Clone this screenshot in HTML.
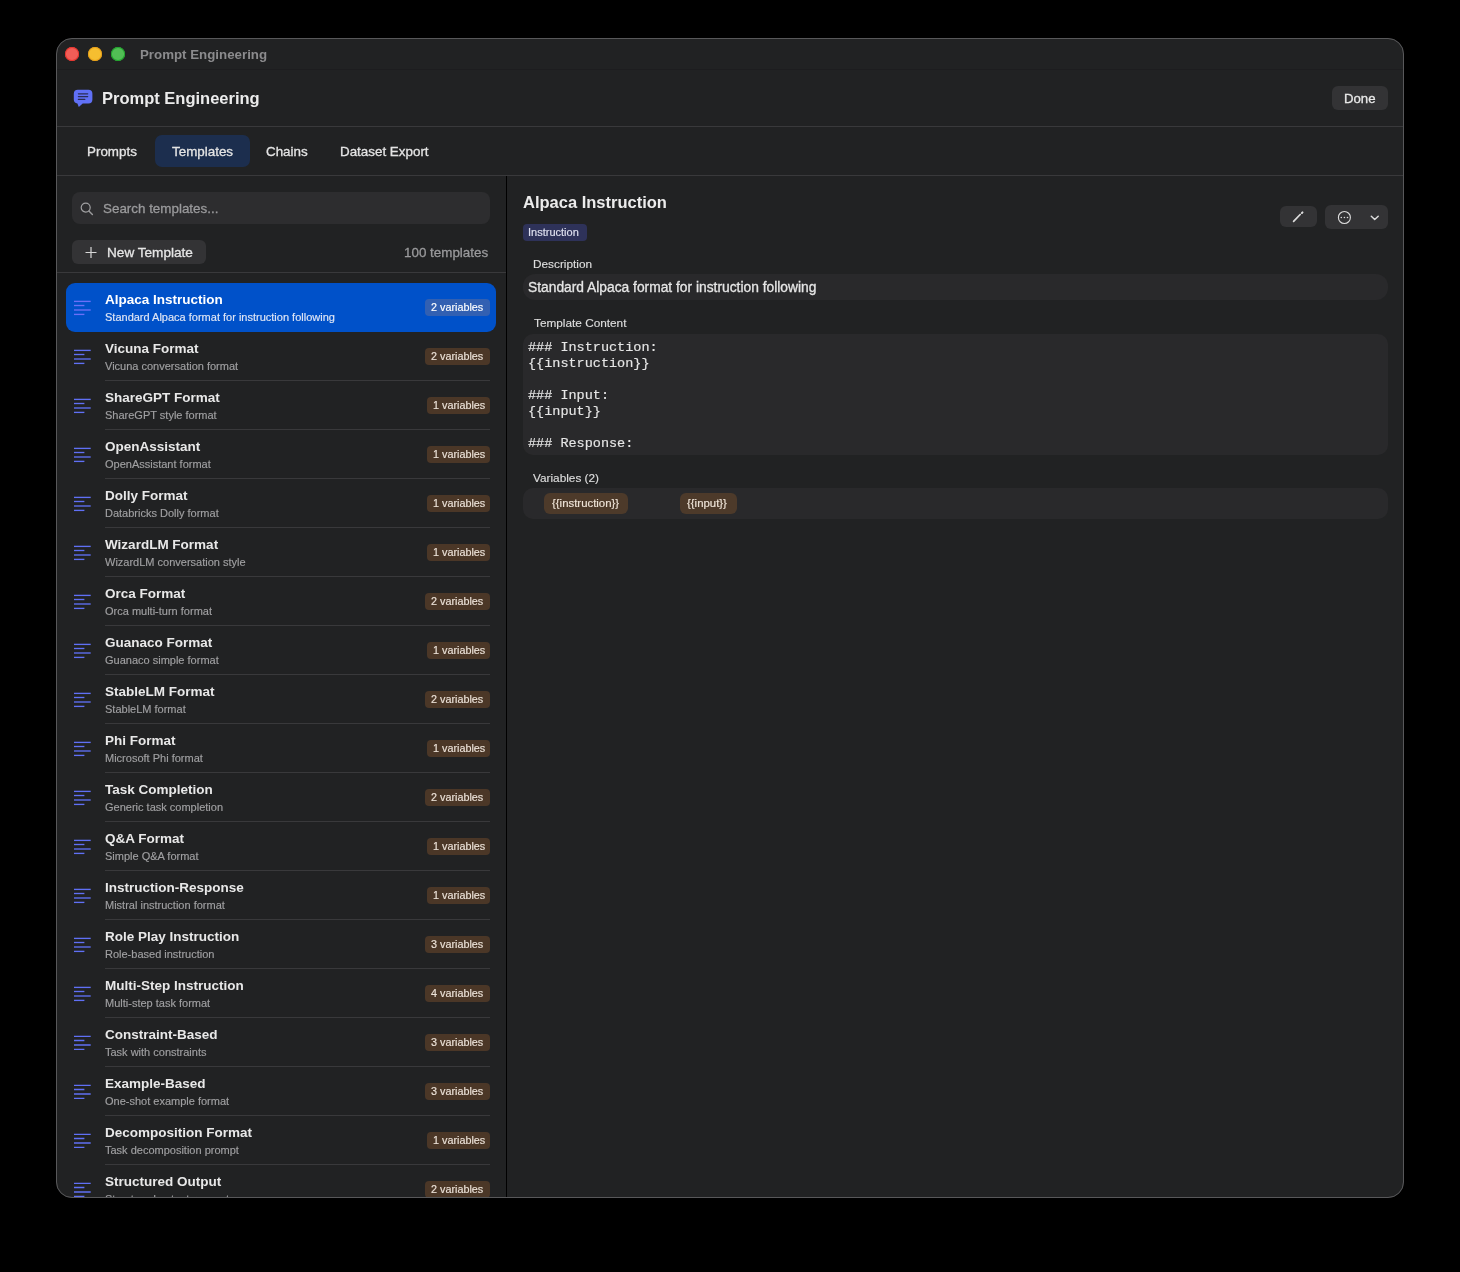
<!DOCTYPE html>
<html><head><meta charset="utf-8"><style>
html,body{margin:0;padding:0;background:#000;}
body{width:1460px;height:1272px;position:relative;overflow:hidden;-webkit-font-smoothing:antialiased;}
</style></head><body>
<div style="position:absolute;left:0px;top:0px;width:1460px;height:1272px;background:#000;border-radius:0px;"></div>
<div style="position:absolute;left:56px;top:38px;width:1348px;height:1160px;border-radius:16px;overflow:hidden;background:#212223">
<div style="position:absolute;left:0px;top:31px;width:1348px;height:1px;background:#1d1d1f;border-radius:0px;"></div>
<div style="position:absolute;left:9px;top:9px;width:14px;height:14px;background:#f25d57;border-radius:7px;box-shadow:inset 0 0 0 0.9px #e8332c;"></div>
<div style="position:absolute;left:32px;top:9px;width:14px;height:14px;background:#f6be30;border-radius:7px;box-shadow:inset 0 0 0 0.9px #e89f17;"></div>
<div style="position:absolute;left:55px;top:9px;width:14px;height:14px;background:#52be55;border-radius:7px;box-shadow:inset 0 0 0 0.9px #1ea52b;"></div>
<div style="position:absolute;left:83.50px;top:9.94px;font-family:'Liberation Sans', sans-serif;font-size:13.3px;line-height:13.3px;font-weight:bold;color:#8b8b8d;white-space:pre;will-change:transform;">Prompt Engineering</div>
<svg style="position:absolute;left:17px;top:50px" width="22" height="20" viewBox="0 0 22 20"><path d="M5 1.7h10.4a4 4 0 0 1 4 4v5.9a4 4 0 0 1-4 4H9.7L5.8 18.9l-1.4-3.3a4 4 0 0 1-3.6-4V5.7a4 4 0 0 1 4-4z" fill="#6070f5"/><path d="M5.4 5.8h9.3M5.4 8.5h9.3M5.4 11.4h6.4" stroke="#2a2d55" stroke-width="1.25" stroke-linecap="round"/></svg>
<div style="position:absolute;left:45.90px;top:52.43px;font-family:'Liberation Sans', sans-serif;font-size:16.5px;line-height:16.5px;font-weight:bold;color:#ececec;white-space:pre;will-change:transform;">Prompt Engineering</div>
<div style="position:absolute;left:1276px;top:48px;width:56px;height:24px;background:#333335;border-radius:6px;"></div>
<div style="position:absolute;left:1288.20px;top:53.83px;font-family:'Liberation Sans', sans-serif;font-size:13.2px;line-height:13.2px;font-weight:normal;color:#e8e8e8;white-space:pre;will-change:transform;-webkit-text-stroke:0.3px #e8e8e8;">Done</div>
<div style="position:absolute;left:0px;top:88px;width:1348px;height:1px;background:#39393b;border-radius:0px;"></div>
<div style="position:absolute;left:99px;top:97px;width:95px;height:32px;background:#1c2e4e;border-radius:7px;"></div>
<div style="position:absolute;left:30.70px;top:106.86px;font-family:'Liberation Sans', sans-serif;font-size:13.4px;line-height:13.4px;font-weight:normal;color:#e4e4e4;white-space:pre;will-change:transform;-webkit-text-stroke:0.3px #e4e4e4;">Prompts</div>
<div style="position:absolute;left:115.50px;top:106.86px;font-family:'Liberation Sans', sans-serif;font-size:13.4px;line-height:13.4px;font-weight:normal;color:#e4e4e4;white-space:pre;will-change:transform;-webkit-text-stroke:0.3px #e4e4e4;">Templates</div>
<div style="position:absolute;left:209.80px;top:106.86px;font-family:'Liberation Sans', sans-serif;font-size:13.4px;line-height:13.4px;font-weight:normal;color:#e4e4e4;white-space:pre;will-change:transform;-webkit-text-stroke:0.3px #e4e4e4;">Chains</div>
<div style="position:absolute;left:283.80px;top:106.86px;font-family:'Liberation Sans', sans-serif;font-size:13.4px;line-height:13.4px;font-weight:normal;color:#e4e4e4;white-space:pre;will-change:transform;-webkit-text-stroke:0.3px #e4e4e4;">Dataset Export</div>
<div style="position:absolute;left:0px;top:137px;width:1348px;height:1px;background:#39393b;border-radius:0px;"></div>
<div style="position:absolute;left:16px;top:154px;width:418px;height:32px;background:#2d2d2f;border-radius:8px;"></div>
<svg style="position:absolute;left:23px;top:162px" width="16" height="18" viewBox="0 0 16 18"><circle cx="6.7" cy="7.6" r="4.5" fill="none" stroke="#a0a0a2" stroke-width="1.2"/><path d="M9.9 10.9l3.5 3.7" stroke="#9a9a9c" stroke-width="1.4" stroke-linecap="round"/></svg>
<div style="position:absolute;left:46.80px;top:163.96px;font-family:'Liberation Sans', sans-serif;font-size:13.4px;line-height:13.4px;font-weight:normal;color:#9a9a9c;white-space:pre;will-change:transform;-webkit-text-stroke:0.3px #9a9a9c;">Search templates...</div>
<div style="position:absolute;left:16px;top:202px;width:134px;height:24px;background:#333335;border-radius:6px;"></div>
<svg style="position:absolute;left:28px;top:208px" width="14" height="14" viewBox="0 0 14 14"><path d="M7 1v11M1.5 6.5h11" stroke="#d8d8d8" stroke-width="1.2"/></svg>
<div style="position:absolute;left:51.00px;top:207.59px;font-family:'Liberation Sans', sans-serif;font-size:13.6px;line-height:13.6px;font-weight:normal;color:#e6e6e6;white-space:pre;will-change:transform;-webkit-text-stroke:0.3px #e6e6e6;">New Template</div>
<div style="position:absolute;left:347.50px;top:207.66px;font-family:'Liberation Sans', sans-serif;font-size:13.4px;line-height:13.4px;font-weight:normal;color:#9a9a9c;white-space:pre;will-change:transform;-webkit-text-stroke:0.3px #9a9a9c;">100 templates</div>
<div style="position:absolute;left:0px;top:234px;width:450px;height:1px;background:#39393b;border-radius:0px;"></div>
<div style="position:absolute;left:450px;top:138px;width:1px;height:1022px;background:#000000;border-radius:0px;"></div>
<div style="position:absolute;left:10px;top:245px;width:430px;height:49px;background:#0051c9;border-radius:9px;"></div>
<svg style="position:absolute;left:17px;top:245px" width="20" height="40" viewBox="0 0 20 40"><path d="M1 18.40h16.70" stroke="#6b70f8" stroke-width="1.35"/><path d="M1 22.50h10.40" stroke="#6b70f8" stroke-width="1.35"/><path d="M1 27.00h16.70" stroke="#6b70f8" stroke-width="1.35"/><path d="M1 31.40h10.40" stroke="#6b70f8" stroke-width="1.35"/></svg>
<div style="position:absolute;left:48.60px;top:254.87px;font-family:'Liberation Sans', sans-serif;font-size:13.5px;line-height:13.5px;font-weight:bold;color:#ffffff;white-space:pre;will-change:transform;">Alpaca Instruction</div>
<div style="position:absolute;left:48.60px;top:273.69px;font-family:'Liberation Sans', sans-serif;font-size:11px;line-height:11px;font-weight:normal;color:#dfe6f5;white-space:pre;will-change:transform;-webkit-text-stroke:0.15px #dfe6f5;">Standard Alpaca format for instruction following</div>
<div style="position:absolute;left:369px;top:261px;width:65px;height:17px;background:#3260b2;border-radius:4px;"></div>
<div style="position:absolute;left:375.00px;top:263.76px;font-family:'Liberation Sans', sans-serif;font-size:10.8px;line-height:10.8px;font-weight:normal;color:#ffffff;white-space:pre;will-change:transform;-webkit-text-stroke:0.15px #ffffff;">2 variables</div>
<div style="position:absolute;left:49px;top:342px;width:385px;height:1px;background:#39393b;border-radius:0px;"></div>
<svg style="position:absolute;left:17px;top:294px" width="20" height="40" viewBox="0 0 20 40"><path d="M1 18.40h16.70" stroke="#6070f5" stroke-width="1.35"/><path d="M1 22.50h10.40" stroke="#6070f5" stroke-width="1.35"/><path d="M1 27.00h16.70" stroke="#6070f5" stroke-width="1.35"/><path d="M1 31.40h10.40" stroke="#6070f5" stroke-width="1.35"/></svg>
<div style="position:absolute;left:48.60px;top:303.87px;font-family:'Liberation Sans', sans-serif;font-size:13.5px;line-height:13.5px;font-weight:bold;color:#e8e8e8;white-space:pre;will-change:transform;">Vicuna Format</div>
<div style="position:absolute;left:48.60px;top:322.69px;font-family:'Liberation Sans', sans-serif;font-size:11px;line-height:11px;font-weight:normal;color:#a0a0a2;white-space:pre;will-change:transform;-webkit-text-stroke:0.15px #a0a0a2;">Vicuna conversation format</div>
<div style="position:absolute;left:369px;top:310px;width:65px;height:17px;background:#4b3727;border-radius:4px;"></div>
<div style="position:absolute;left:375.00px;top:312.76px;font-family:'Liberation Sans', sans-serif;font-size:10.8px;line-height:10.8px;font-weight:normal;color:#ece2d8;white-space:pre;will-change:transform;-webkit-text-stroke:0.15px #ece2d8;">2 variables</div>
<div style="position:absolute;left:49px;top:391px;width:385px;height:1px;background:#39393b;border-radius:0px;"></div>
<svg style="position:absolute;left:17px;top:343px" width="20" height="40" viewBox="0 0 20 40"><path d="M1 18.40h16.70" stroke="#6070f5" stroke-width="1.35"/><path d="M1 22.50h10.40" stroke="#6070f5" stroke-width="1.35"/><path d="M1 27.00h16.70" stroke="#6070f5" stroke-width="1.35"/><path d="M1 31.40h10.40" stroke="#6070f5" stroke-width="1.35"/></svg>
<div style="position:absolute;left:48.60px;top:352.87px;font-family:'Liberation Sans', sans-serif;font-size:13.5px;line-height:13.5px;font-weight:bold;color:#e8e8e8;white-space:pre;will-change:transform;">ShareGPT Format</div>
<div style="position:absolute;left:48.60px;top:371.69px;font-family:'Liberation Sans', sans-serif;font-size:11px;line-height:11px;font-weight:normal;color:#a0a0a2;white-space:pre;will-change:transform;-webkit-text-stroke:0.15px #a0a0a2;">ShareGPT style format</div>
<div style="position:absolute;left:371px;top:359px;width:63px;height:17px;background:#4b3727;border-radius:4px;"></div>
<div style="position:absolute;left:377.00px;top:361.76px;font-family:'Liberation Sans', sans-serif;font-size:10.8px;line-height:10.8px;font-weight:normal;color:#ece2d8;white-space:pre;will-change:transform;-webkit-text-stroke:0.15px #ece2d8;">1 variables</div>
<div style="position:absolute;left:49px;top:440px;width:385px;height:1px;background:#39393b;border-radius:0px;"></div>
<svg style="position:absolute;left:17px;top:392px" width="20" height="40" viewBox="0 0 20 40"><path d="M1 18.40h16.70" stroke="#6070f5" stroke-width="1.35"/><path d="M1 22.50h10.40" stroke="#6070f5" stroke-width="1.35"/><path d="M1 27.00h16.70" stroke="#6070f5" stroke-width="1.35"/><path d="M1 31.40h10.40" stroke="#6070f5" stroke-width="1.35"/></svg>
<div style="position:absolute;left:48.60px;top:401.87px;font-family:'Liberation Sans', sans-serif;font-size:13.5px;line-height:13.5px;font-weight:bold;color:#e8e8e8;white-space:pre;will-change:transform;">OpenAssistant</div>
<div style="position:absolute;left:48.60px;top:420.69px;font-family:'Liberation Sans', sans-serif;font-size:11px;line-height:11px;font-weight:normal;color:#a0a0a2;white-space:pre;will-change:transform;-webkit-text-stroke:0.15px #a0a0a2;">OpenAssistant format</div>
<div style="position:absolute;left:371px;top:408px;width:63px;height:17px;background:#4b3727;border-radius:4px;"></div>
<div style="position:absolute;left:377.00px;top:410.76px;font-family:'Liberation Sans', sans-serif;font-size:10.8px;line-height:10.8px;font-weight:normal;color:#ece2d8;white-space:pre;will-change:transform;-webkit-text-stroke:0.15px #ece2d8;">1 variables</div>
<div style="position:absolute;left:49px;top:489px;width:385px;height:1px;background:#39393b;border-radius:0px;"></div>
<svg style="position:absolute;left:17px;top:441px" width="20" height="40" viewBox="0 0 20 40"><path d="M1 18.40h16.70" stroke="#6070f5" stroke-width="1.35"/><path d="M1 22.50h10.40" stroke="#6070f5" stroke-width="1.35"/><path d="M1 27.00h16.70" stroke="#6070f5" stroke-width="1.35"/><path d="M1 31.40h10.40" stroke="#6070f5" stroke-width="1.35"/></svg>
<div style="position:absolute;left:48.60px;top:450.87px;font-family:'Liberation Sans', sans-serif;font-size:13.5px;line-height:13.5px;font-weight:bold;color:#e8e8e8;white-space:pre;will-change:transform;">Dolly Format</div>
<div style="position:absolute;left:48.60px;top:469.69px;font-family:'Liberation Sans', sans-serif;font-size:11px;line-height:11px;font-weight:normal;color:#a0a0a2;white-space:pre;will-change:transform;-webkit-text-stroke:0.15px #a0a0a2;">Databricks Dolly format</div>
<div style="position:absolute;left:371px;top:457px;width:63px;height:17px;background:#4b3727;border-radius:4px;"></div>
<div style="position:absolute;left:377.00px;top:459.76px;font-family:'Liberation Sans', sans-serif;font-size:10.8px;line-height:10.8px;font-weight:normal;color:#ece2d8;white-space:pre;will-change:transform;-webkit-text-stroke:0.15px #ece2d8;">1 variables</div>
<div style="position:absolute;left:49px;top:538px;width:385px;height:1px;background:#39393b;border-radius:0px;"></div>
<svg style="position:absolute;left:17px;top:490px" width="20" height="40" viewBox="0 0 20 40"><path d="M1 18.40h16.70" stroke="#6070f5" stroke-width="1.35"/><path d="M1 22.50h10.40" stroke="#6070f5" stroke-width="1.35"/><path d="M1 27.00h16.70" stroke="#6070f5" stroke-width="1.35"/><path d="M1 31.40h10.40" stroke="#6070f5" stroke-width="1.35"/></svg>
<div style="position:absolute;left:48.60px;top:499.87px;font-family:'Liberation Sans', sans-serif;font-size:13.5px;line-height:13.5px;font-weight:bold;color:#e8e8e8;white-space:pre;will-change:transform;">WizardLM Format</div>
<div style="position:absolute;left:48.60px;top:518.69px;font-family:'Liberation Sans', sans-serif;font-size:11px;line-height:11px;font-weight:normal;color:#a0a0a2;white-space:pre;will-change:transform;-webkit-text-stroke:0.15px #a0a0a2;">WizardLM conversation style</div>
<div style="position:absolute;left:371px;top:506px;width:63px;height:17px;background:#4b3727;border-radius:4px;"></div>
<div style="position:absolute;left:377.00px;top:508.76px;font-family:'Liberation Sans', sans-serif;font-size:10.8px;line-height:10.8px;font-weight:normal;color:#ece2d8;white-space:pre;will-change:transform;-webkit-text-stroke:0.15px #ece2d8;">1 variables</div>
<div style="position:absolute;left:49px;top:587px;width:385px;height:1px;background:#39393b;border-radius:0px;"></div>
<svg style="position:absolute;left:17px;top:539px" width="20" height="40" viewBox="0 0 20 40"><path d="M1 18.40h16.70" stroke="#6070f5" stroke-width="1.35"/><path d="M1 22.50h10.40" stroke="#6070f5" stroke-width="1.35"/><path d="M1 27.00h16.70" stroke="#6070f5" stroke-width="1.35"/><path d="M1 31.40h10.40" stroke="#6070f5" stroke-width="1.35"/></svg>
<div style="position:absolute;left:48.60px;top:548.87px;font-family:'Liberation Sans', sans-serif;font-size:13.5px;line-height:13.5px;font-weight:bold;color:#e8e8e8;white-space:pre;will-change:transform;">Orca Format</div>
<div style="position:absolute;left:48.60px;top:567.69px;font-family:'Liberation Sans', sans-serif;font-size:11px;line-height:11px;font-weight:normal;color:#a0a0a2;white-space:pre;will-change:transform;-webkit-text-stroke:0.15px #a0a0a2;">Orca multi-turn format</div>
<div style="position:absolute;left:369px;top:555px;width:65px;height:17px;background:#4b3727;border-radius:4px;"></div>
<div style="position:absolute;left:375.00px;top:557.76px;font-family:'Liberation Sans', sans-serif;font-size:10.8px;line-height:10.8px;font-weight:normal;color:#ece2d8;white-space:pre;will-change:transform;-webkit-text-stroke:0.15px #ece2d8;">2 variables</div>
<div style="position:absolute;left:49px;top:636px;width:385px;height:1px;background:#39393b;border-radius:0px;"></div>
<svg style="position:absolute;left:17px;top:588px" width="20" height="40" viewBox="0 0 20 40"><path d="M1 18.40h16.70" stroke="#6070f5" stroke-width="1.35"/><path d="M1 22.50h10.40" stroke="#6070f5" stroke-width="1.35"/><path d="M1 27.00h16.70" stroke="#6070f5" stroke-width="1.35"/><path d="M1 31.40h10.40" stroke="#6070f5" stroke-width="1.35"/></svg>
<div style="position:absolute;left:48.60px;top:597.87px;font-family:'Liberation Sans', sans-serif;font-size:13.5px;line-height:13.5px;font-weight:bold;color:#e8e8e8;white-space:pre;will-change:transform;">Guanaco Format</div>
<div style="position:absolute;left:48.60px;top:616.69px;font-family:'Liberation Sans', sans-serif;font-size:11px;line-height:11px;font-weight:normal;color:#a0a0a2;white-space:pre;will-change:transform;-webkit-text-stroke:0.15px #a0a0a2;">Guanaco simple format</div>
<div style="position:absolute;left:371px;top:604px;width:63px;height:17px;background:#4b3727;border-radius:4px;"></div>
<div style="position:absolute;left:377.00px;top:606.76px;font-family:'Liberation Sans', sans-serif;font-size:10.8px;line-height:10.8px;font-weight:normal;color:#ece2d8;white-space:pre;will-change:transform;-webkit-text-stroke:0.15px #ece2d8;">1 variables</div>
<div style="position:absolute;left:49px;top:685px;width:385px;height:1px;background:#39393b;border-radius:0px;"></div>
<svg style="position:absolute;left:17px;top:637px" width="20" height="40" viewBox="0 0 20 40"><path d="M1 18.40h16.70" stroke="#6070f5" stroke-width="1.35"/><path d="M1 22.50h10.40" stroke="#6070f5" stroke-width="1.35"/><path d="M1 27.00h16.70" stroke="#6070f5" stroke-width="1.35"/><path d="M1 31.40h10.40" stroke="#6070f5" stroke-width="1.35"/></svg>
<div style="position:absolute;left:48.60px;top:646.87px;font-family:'Liberation Sans', sans-serif;font-size:13.5px;line-height:13.5px;font-weight:bold;color:#e8e8e8;white-space:pre;will-change:transform;">StableLM Format</div>
<div style="position:absolute;left:48.60px;top:665.69px;font-family:'Liberation Sans', sans-serif;font-size:11px;line-height:11px;font-weight:normal;color:#a0a0a2;white-space:pre;will-change:transform;-webkit-text-stroke:0.15px #a0a0a2;">StableLM format</div>
<div style="position:absolute;left:369px;top:653px;width:65px;height:17px;background:#4b3727;border-radius:4px;"></div>
<div style="position:absolute;left:375.00px;top:655.76px;font-family:'Liberation Sans', sans-serif;font-size:10.8px;line-height:10.8px;font-weight:normal;color:#ece2d8;white-space:pre;will-change:transform;-webkit-text-stroke:0.15px #ece2d8;">2 variables</div>
<div style="position:absolute;left:49px;top:734px;width:385px;height:1px;background:#39393b;border-radius:0px;"></div>
<svg style="position:absolute;left:17px;top:686px" width="20" height="40" viewBox="0 0 20 40"><path d="M1 18.40h16.70" stroke="#6070f5" stroke-width="1.35"/><path d="M1 22.50h10.40" stroke="#6070f5" stroke-width="1.35"/><path d="M1 27.00h16.70" stroke="#6070f5" stroke-width="1.35"/><path d="M1 31.40h10.40" stroke="#6070f5" stroke-width="1.35"/></svg>
<div style="position:absolute;left:48.60px;top:695.87px;font-family:'Liberation Sans', sans-serif;font-size:13.5px;line-height:13.5px;font-weight:bold;color:#e8e8e8;white-space:pre;will-change:transform;">Phi Format</div>
<div style="position:absolute;left:48.60px;top:714.69px;font-family:'Liberation Sans', sans-serif;font-size:11px;line-height:11px;font-weight:normal;color:#a0a0a2;white-space:pre;will-change:transform;-webkit-text-stroke:0.15px #a0a0a2;">Microsoft Phi format</div>
<div style="position:absolute;left:371px;top:702px;width:63px;height:17px;background:#4b3727;border-radius:4px;"></div>
<div style="position:absolute;left:377.00px;top:704.76px;font-family:'Liberation Sans', sans-serif;font-size:10.8px;line-height:10.8px;font-weight:normal;color:#ece2d8;white-space:pre;will-change:transform;-webkit-text-stroke:0.15px #ece2d8;">1 variables</div>
<div style="position:absolute;left:49px;top:783px;width:385px;height:1px;background:#39393b;border-radius:0px;"></div>
<svg style="position:absolute;left:17px;top:735px" width="20" height="40" viewBox="0 0 20 40"><path d="M1 18.40h16.70" stroke="#6070f5" stroke-width="1.35"/><path d="M1 22.50h10.40" stroke="#6070f5" stroke-width="1.35"/><path d="M1 27.00h16.70" stroke="#6070f5" stroke-width="1.35"/><path d="M1 31.40h10.40" stroke="#6070f5" stroke-width="1.35"/></svg>
<div style="position:absolute;left:48.60px;top:744.87px;font-family:'Liberation Sans', sans-serif;font-size:13.5px;line-height:13.5px;font-weight:bold;color:#e8e8e8;white-space:pre;will-change:transform;">Task Completion</div>
<div style="position:absolute;left:48.60px;top:763.69px;font-family:'Liberation Sans', sans-serif;font-size:11px;line-height:11px;font-weight:normal;color:#a0a0a2;white-space:pre;will-change:transform;-webkit-text-stroke:0.15px #a0a0a2;">Generic task completion</div>
<div style="position:absolute;left:369px;top:751px;width:65px;height:17px;background:#4b3727;border-radius:4px;"></div>
<div style="position:absolute;left:375.00px;top:753.76px;font-family:'Liberation Sans', sans-serif;font-size:10.8px;line-height:10.8px;font-weight:normal;color:#ece2d8;white-space:pre;will-change:transform;-webkit-text-stroke:0.15px #ece2d8;">2 variables</div>
<div style="position:absolute;left:49px;top:832px;width:385px;height:1px;background:#39393b;border-radius:0px;"></div>
<svg style="position:absolute;left:17px;top:784px" width="20" height="40" viewBox="0 0 20 40"><path d="M1 18.40h16.70" stroke="#6070f5" stroke-width="1.35"/><path d="M1 22.50h10.40" stroke="#6070f5" stroke-width="1.35"/><path d="M1 27.00h16.70" stroke="#6070f5" stroke-width="1.35"/><path d="M1 31.40h10.40" stroke="#6070f5" stroke-width="1.35"/></svg>
<div style="position:absolute;left:48.60px;top:793.87px;font-family:'Liberation Sans', sans-serif;font-size:13.5px;line-height:13.5px;font-weight:bold;color:#e8e8e8;white-space:pre;will-change:transform;">Q&amp;A Format</div>
<div style="position:absolute;left:48.60px;top:812.69px;font-family:'Liberation Sans', sans-serif;font-size:11px;line-height:11px;font-weight:normal;color:#a0a0a2;white-space:pre;will-change:transform;-webkit-text-stroke:0.15px #a0a0a2;">Simple Q&amp;A format</div>
<div style="position:absolute;left:371px;top:800px;width:63px;height:17px;background:#4b3727;border-radius:4px;"></div>
<div style="position:absolute;left:377.00px;top:802.76px;font-family:'Liberation Sans', sans-serif;font-size:10.8px;line-height:10.8px;font-weight:normal;color:#ece2d8;white-space:pre;will-change:transform;-webkit-text-stroke:0.15px #ece2d8;">1 variables</div>
<div style="position:absolute;left:49px;top:881px;width:385px;height:1px;background:#39393b;border-radius:0px;"></div>
<svg style="position:absolute;left:17px;top:833px" width="20" height="40" viewBox="0 0 20 40"><path d="M1 18.40h16.70" stroke="#6070f5" stroke-width="1.35"/><path d="M1 22.50h10.40" stroke="#6070f5" stroke-width="1.35"/><path d="M1 27.00h16.70" stroke="#6070f5" stroke-width="1.35"/><path d="M1 31.40h10.40" stroke="#6070f5" stroke-width="1.35"/></svg>
<div style="position:absolute;left:48.60px;top:842.87px;font-family:'Liberation Sans', sans-serif;font-size:13.5px;line-height:13.5px;font-weight:bold;color:#e8e8e8;white-space:pre;will-change:transform;">Instruction-Response</div>
<div style="position:absolute;left:48.60px;top:861.69px;font-family:'Liberation Sans', sans-serif;font-size:11px;line-height:11px;font-weight:normal;color:#a0a0a2;white-space:pre;will-change:transform;-webkit-text-stroke:0.15px #a0a0a2;">Mistral instruction format</div>
<div style="position:absolute;left:371px;top:849px;width:63px;height:17px;background:#4b3727;border-radius:4px;"></div>
<div style="position:absolute;left:377.00px;top:851.76px;font-family:'Liberation Sans', sans-serif;font-size:10.8px;line-height:10.8px;font-weight:normal;color:#ece2d8;white-space:pre;will-change:transform;-webkit-text-stroke:0.15px #ece2d8;">1 variables</div>
<div style="position:absolute;left:49px;top:930px;width:385px;height:1px;background:#39393b;border-radius:0px;"></div>
<svg style="position:absolute;left:17px;top:882px" width="20" height="40" viewBox="0 0 20 40"><path d="M1 18.40h16.70" stroke="#6070f5" stroke-width="1.35"/><path d="M1 22.50h10.40" stroke="#6070f5" stroke-width="1.35"/><path d="M1 27.00h16.70" stroke="#6070f5" stroke-width="1.35"/><path d="M1 31.40h10.40" stroke="#6070f5" stroke-width="1.35"/></svg>
<div style="position:absolute;left:48.60px;top:891.87px;font-family:'Liberation Sans', sans-serif;font-size:13.5px;line-height:13.5px;font-weight:bold;color:#e8e8e8;white-space:pre;will-change:transform;">Role Play Instruction</div>
<div style="position:absolute;left:48.60px;top:910.69px;font-family:'Liberation Sans', sans-serif;font-size:11px;line-height:11px;font-weight:normal;color:#a0a0a2;white-space:pre;will-change:transform;-webkit-text-stroke:0.15px #a0a0a2;">Role-based instruction</div>
<div style="position:absolute;left:369px;top:898px;width:65px;height:17px;background:#4b3727;border-radius:4px;"></div>
<div style="position:absolute;left:375.00px;top:900.76px;font-family:'Liberation Sans', sans-serif;font-size:10.8px;line-height:10.8px;font-weight:normal;color:#ece2d8;white-space:pre;will-change:transform;-webkit-text-stroke:0.15px #ece2d8;">3 variables</div>
<div style="position:absolute;left:49px;top:979px;width:385px;height:1px;background:#39393b;border-radius:0px;"></div>
<svg style="position:absolute;left:17px;top:931px" width="20" height="40" viewBox="0 0 20 40"><path d="M1 18.40h16.70" stroke="#6070f5" stroke-width="1.35"/><path d="M1 22.50h10.40" stroke="#6070f5" stroke-width="1.35"/><path d="M1 27.00h16.70" stroke="#6070f5" stroke-width="1.35"/><path d="M1 31.40h10.40" stroke="#6070f5" stroke-width="1.35"/></svg>
<div style="position:absolute;left:48.60px;top:940.87px;font-family:'Liberation Sans', sans-serif;font-size:13.5px;line-height:13.5px;font-weight:bold;color:#e8e8e8;white-space:pre;will-change:transform;">Multi-Step Instruction</div>
<div style="position:absolute;left:48.60px;top:959.69px;font-family:'Liberation Sans', sans-serif;font-size:11px;line-height:11px;font-weight:normal;color:#a0a0a2;white-space:pre;will-change:transform;-webkit-text-stroke:0.15px #a0a0a2;">Multi-step task format</div>
<div style="position:absolute;left:369px;top:947px;width:65px;height:17px;background:#4b3727;border-radius:4px;"></div>
<div style="position:absolute;left:375.00px;top:949.76px;font-family:'Liberation Sans', sans-serif;font-size:10.8px;line-height:10.8px;font-weight:normal;color:#ece2d8;white-space:pre;will-change:transform;-webkit-text-stroke:0.15px #ece2d8;">4 variables</div>
<div style="position:absolute;left:49px;top:1028px;width:385px;height:1px;background:#39393b;border-radius:0px;"></div>
<svg style="position:absolute;left:17px;top:980px" width="20" height="40" viewBox="0 0 20 40"><path d="M1 18.40h16.70" stroke="#6070f5" stroke-width="1.35"/><path d="M1 22.50h10.40" stroke="#6070f5" stroke-width="1.35"/><path d="M1 27.00h16.70" stroke="#6070f5" stroke-width="1.35"/><path d="M1 31.40h10.40" stroke="#6070f5" stroke-width="1.35"/></svg>
<div style="position:absolute;left:48.60px;top:989.87px;font-family:'Liberation Sans', sans-serif;font-size:13.5px;line-height:13.5px;font-weight:bold;color:#e8e8e8;white-space:pre;will-change:transform;">Constraint-Based</div>
<div style="position:absolute;left:48.60px;top:1008.69px;font-family:'Liberation Sans', sans-serif;font-size:11px;line-height:11px;font-weight:normal;color:#a0a0a2;white-space:pre;will-change:transform;-webkit-text-stroke:0.15px #a0a0a2;">Task with constraints</div>
<div style="position:absolute;left:369px;top:996px;width:65px;height:17px;background:#4b3727;border-radius:4px;"></div>
<div style="position:absolute;left:375.00px;top:998.76px;font-family:'Liberation Sans', sans-serif;font-size:10.8px;line-height:10.8px;font-weight:normal;color:#ece2d8;white-space:pre;will-change:transform;-webkit-text-stroke:0.15px #ece2d8;">3 variables</div>
<div style="position:absolute;left:49px;top:1077px;width:385px;height:1px;background:#39393b;border-radius:0px;"></div>
<svg style="position:absolute;left:17px;top:1029px" width="20" height="40" viewBox="0 0 20 40"><path d="M1 18.40h16.70" stroke="#6070f5" stroke-width="1.35"/><path d="M1 22.50h10.40" stroke="#6070f5" stroke-width="1.35"/><path d="M1 27.00h16.70" stroke="#6070f5" stroke-width="1.35"/><path d="M1 31.40h10.40" stroke="#6070f5" stroke-width="1.35"/></svg>
<div style="position:absolute;left:48.60px;top:1038.87px;font-family:'Liberation Sans', sans-serif;font-size:13.5px;line-height:13.5px;font-weight:bold;color:#e8e8e8;white-space:pre;will-change:transform;">Example-Based</div>
<div style="position:absolute;left:48.60px;top:1057.69px;font-family:'Liberation Sans', sans-serif;font-size:11px;line-height:11px;font-weight:normal;color:#a0a0a2;white-space:pre;will-change:transform;-webkit-text-stroke:0.15px #a0a0a2;">One-shot example format</div>
<div style="position:absolute;left:369px;top:1045px;width:65px;height:17px;background:#4b3727;border-radius:4px;"></div>
<div style="position:absolute;left:375.00px;top:1047.76px;font-family:'Liberation Sans', sans-serif;font-size:10.8px;line-height:10.8px;font-weight:normal;color:#ece2d8;white-space:pre;will-change:transform;-webkit-text-stroke:0.15px #ece2d8;">3 variables</div>
<div style="position:absolute;left:49px;top:1126px;width:385px;height:1px;background:#39393b;border-radius:0px;"></div>
<svg style="position:absolute;left:17px;top:1078px" width="20" height="40" viewBox="0 0 20 40"><path d="M1 18.40h16.70" stroke="#6070f5" stroke-width="1.35"/><path d="M1 22.50h10.40" stroke="#6070f5" stroke-width="1.35"/><path d="M1 27.00h16.70" stroke="#6070f5" stroke-width="1.35"/><path d="M1 31.40h10.40" stroke="#6070f5" stroke-width="1.35"/></svg>
<div style="position:absolute;left:48.60px;top:1087.87px;font-family:'Liberation Sans', sans-serif;font-size:13.5px;line-height:13.5px;font-weight:bold;color:#e8e8e8;white-space:pre;will-change:transform;">Decomposition Format</div>
<div style="position:absolute;left:48.60px;top:1106.69px;font-family:'Liberation Sans', sans-serif;font-size:11px;line-height:11px;font-weight:normal;color:#a0a0a2;white-space:pre;will-change:transform;-webkit-text-stroke:0.15px #a0a0a2;">Task decomposition prompt</div>
<div style="position:absolute;left:371px;top:1094px;width:63px;height:17px;background:#4b3727;border-radius:4px;"></div>
<div style="position:absolute;left:377.00px;top:1096.76px;font-family:'Liberation Sans', sans-serif;font-size:10.8px;line-height:10.8px;font-weight:normal;color:#ece2d8;white-space:pre;will-change:transform;-webkit-text-stroke:0.15px #ece2d8;">1 variables</div>
<div style="position:absolute;left:49px;top:1175px;width:385px;height:1px;background:#39393b;border-radius:0px;"></div>
<svg style="position:absolute;left:17px;top:1127px" width="20" height="40" viewBox="0 0 20 40"><path d="M1 18.40h16.70" stroke="#6070f5" stroke-width="1.35"/><path d="M1 22.50h10.40" stroke="#6070f5" stroke-width="1.35"/><path d="M1 27.00h16.70" stroke="#6070f5" stroke-width="1.35"/><path d="M1 31.40h10.40" stroke="#6070f5" stroke-width="1.35"/></svg>
<div style="position:absolute;left:48.60px;top:1136.87px;font-family:'Liberation Sans', sans-serif;font-size:13.5px;line-height:13.5px;font-weight:bold;color:#e8e8e8;white-space:pre;will-change:transform;">Structured Output</div>
<div style="position:absolute;left:48.60px;top:1155.69px;font-family:'Liberation Sans', sans-serif;font-size:11px;line-height:11px;font-weight:normal;color:#a0a0a2;white-space:pre;will-change:transform;-webkit-text-stroke:0.15px #a0a0a2;">Structured output request</div>
<div style="position:absolute;left:369px;top:1143px;width:65px;height:17px;background:#4b3727;border-radius:4px;"></div>
<div style="position:absolute;left:375.00px;top:1145.76px;font-family:'Liberation Sans', sans-serif;font-size:10.8px;line-height:10.8px;font-weight:normal;color:#ece2d8;white-space:pre;will-change:transform;-webkit-text-stroke:0.15px #ece2d8;">2 variables</div>
<div style="position:absolute;left:467.20px;top:156.13px;font-family:'Liberation Sans', sans-serif;font-size:16.5px;line-height:16.5px;font-weight:bold;color:#ececec;white-space:pre;will-change:transform;">Alpaca Instruction</div>
<div style="position:absolute;left:467px;top:186px;width:64px;height:17px;background:#2e3259;border-radius:4px;"></div>
<div style="position:absolute;left:472.10px;top:188.69px;font-family:'Liberation Sans', sans-serif;font-size:11px;line-height:11px;font-weight:normal;color:#dfe1f0;white-space:pre;will-change:transform;-webkit-text-stroke:0.15px #dfe1f0;">Instruction</div>
<div style="position:absolute;left:1224px;top:168px;width:37px;height:21px;background:#333335;border-radius:6px;"></div>
<svg style="position:absolute;left:1234px;top:171px" width="16" height="16" viewBox="0 0 16 16"><path d="M3.6 12.4L10.2 5.5" stroke="#dcdcdc" stroke-width="1.7" stroke-linecap="round"/><path d="M11.9 4.0L12.5 3.4" stroke="#dcdcdc" stroke-width="2.0" stroke-linecap="round"/></svg>
<div style="position:absolute;left:1269px;top:167px;width:63px;height:24px;background:#333335;border-radius:6px;"></div>
<svg style="position:absolute;left:1280px;top:171px" width="17" height="17" viewBox="0 0 17 17"><circle cx="8.4" cy="8.5" r="6.0" fill="none" stroke="#dcdcdc" stroke-width="1.1"/><circle cx="5.3" cy="8.5" r="0.8" fill="#dcdcdc"/><circle cx="8.4" cy="8.5" r="0.8" fill="#dcdcdc"/><circle cx="11.5" cy="8.5" r="0.8" fill="#dcdcdc"/></svg>
<svg style="position:absolute;left:1313px;top:175px" width="11" height="9" viewBox="0 0 11 9"><path d="M2.3 3.3L5.7 6.5L9.2 3.3" fill="none" stroke="#dcdcdc" stroke-width="1.5" stroke-linecap="round" stroke-linejoin="round"/></svg>
<div style="position:absolute;left:477.00px;top:220.81px;font-family:'Liberation Sans', sans-serif;font-size:11.8px;line-height:11.8px;font-weight:normal;color:#dedede;white-space:pre;will-change:transform;-webkit-text-stroke:0.15px #dedede;">Description</div>
<div style="position:absolute;left:467px;top:236px;width:865px;height:26px;background:#29292b;border-radius:12px;"></div>
<div style="position:absolute;left:471.80px;top:242.52px;font-family:'Liberation Sans', sans-serif;font-size:13.8px;line-height:13.8px;font-weight:normal;color:#e6e6e6;white-space:pre;will-change:transform;-webkit-text-stroke:0.3px #e6e6e6;">Standard Alpaca format for instruction following</div>
<div style="position:absolute;left:477.50px;top:280.11px;font-family:'Liberation Sans', sans-serif;font-size:11.8px;line-height:11.8px;font-weight:normal;color:#dedede;white-space:pre;will-change:transform;-webkit-text-stroke:0.15px #dedede;">Template Content</div>
<div style="position:absolute;left:467px;top:296px;width:865px;height:121px;background:#29292b;border-radius:10px;"></div>
<div style="position:absolute;left:471.50px;top:302.97px;font-family:'Liberation Mono', monospace;font-size:13.5px;line-height:13.5px;font-weight:normal;color:#e6e6e6;white-space:pre;will-change:transform;-webkit-text-stroke:0.15px #e6e6e6;">### Instruction:</div>
<div style="position:absolute;left:471.50px;top:318.97px;font-family:'Liberation Mono', monospace;font-size:13.5px;line-height:13.5px;font-weight:normal;color:#e6e6e6;white-space:pre;will-change:transform;-webkit-text-stroke:0.15px #e6e6e6;">{{instruction}}</div>
<div style="position:absolute;left:471.50px;top:350.97px;font-family:'Liberation Mono', monospace;font-size:13.5px;line-height:13.5px;font-weight:normal;color:#e6e6e6;white-space:pre;will-change:transform;-webkit-text-stroke:0.15px #e6e6e6;">### Input:</div>
<div style="position:absolute;left:471.50px;top:366.97px;font-family:'Liberation Mono', monospace;font-size:13.5px;line-height:13.5px;font-weight:normal;color:#e6e6e6;white-space:pre;will-change:transform;-webkit-text-stroke:0.15px #e6e6e6;">{{input}}</div>
<div style="position:absolute;left:471.50px;top:398.97px;font-family:'Liberation Mono', monospace;font-size:13.5px;line-height:13.5px;font-weight:normal;color:#e6e6e6;white-space:pre;will-change:transform;-webkit-text-stroke:0.15px #e6e6e6;">### Response:</div>
<div style="position:absolute;left:477.00px;top:435.21px;font-family:'Liberation Sans', sans-serif;font-size:11.8px;line-height:11.8px;font-weight:normal;color:#dedede;white-space:pre;will-change:transform;-webkit-text-stroke:0.15px #dedede;">Variables (2)</div>
<div style="position:absolute;left:467px;top:450px;width:865px;height:31px;background:#29292b;border-radius:10px;"></div>
<div style="position:absolute;left:488px;top:455px;width:84px;height:21px;background:#4d3a2a;border-radius:6px;"></div>
<div style="position:absolute;left:495.50px;top:460.15px;font-family:'Liberation Sans', sans-serif;font-size:11.4px;line-height:11.4px;font-weight:normal;color:#efe4d8;white-space:pre;will-change:transform;-webkit-text-stroke:0.15px #efe4d8;">{{instruction}}</div>
<div style="position:absolute;left:624px;top:455px;width:57px;height:21px;background:#4d3a2a;border-radius:6px;"></div>
<div style="position:absolute;left:631.30px;top:460.15px;font-family:'Liberation Sans', sans-serif;font-size:11.4px;line-height:11.4px;font-weight:normal;color:#efe4d8;white-space:pre;will-change:transform;-webkit-text-stroke:0.15px #efe4d8;">{{input}}</div>
</div>
<div style="position:absolute;left:56px;top:38px;width:1346px;height:1158px;border:1px solid #58585a;border-radius:16px;"></div>
</body></html>
